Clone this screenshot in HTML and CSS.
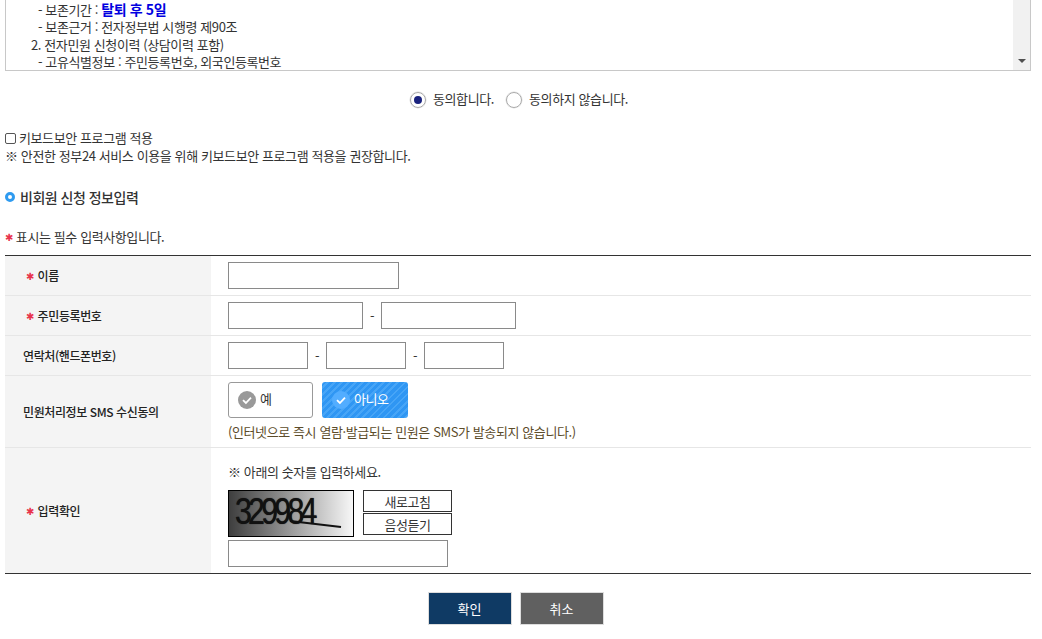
FILE: index.html
```html
<!DOCTYPE html>
<html lang="ko">
<head>
  <meta charset="utf-8">
  <title>비회원 신청 정보입력</title>
  <link rel="stylesheet" href="styles.css">
</head>
<body>
  <div class="container">
    <div class="terms">
      <div class="terms-text">
        <p class="sub">- 보존기간 : <strong class="blue">탈퇴 후 5일</strong></p>
        <p class="sub">- 보존근거 : 전자정부법 시행령 제90조</p>
        <p class="item">2. 전자민원 신청이력 (상담이력 포함)</p>
        <p class="sub">- 고유식별정보 : 주민등록번호, 외국인등록번호</p>
      </div>
      <div class="scrollbar"><span class="arrow"></span></div>
    </div>

    <div class="agree">
      <span class="radio on"></span><span class="agree-label">동의합니다.</span>
      <span class="radio"></span><span>동의하지 않습니다.</span>
    </div>

    <div class="keyboard">
      <label class="check-line"><span class="check"></span>키보드보안 프로그램 적용</label>
      <p>※ 안전한 정부24 서비스 이용을 위해 키보드보안 프로그램 적용을 권장합니다.</p>
    </div>

    <h2 class="title"><span class="ring"></span>비회원 신청 정보입력</h2>
    <p class="required-note"><span class="star">✱</span> 표시는 필수 입력사항입니다.</p>

    <div class="form">
      <div class="row r-name">
        <div class="head indent"><span class="star">✱</span> 이름</div>
        <div class="cell"><input class="input w170" type="text"></div>
      </div>
      <div class="row r-id">
        <div class="head indent"><span class="star">✱</span> 주민등록번호</div>
        <div class="cell">
          <input class="input w135" type="text"><span class="dash">-</span><input class="input w135" type="text">
        </div>
      </div>
      <div class="row r-tel">
        <div class="head">연락처(핸드폰번호)</div>
        <div class="cell">
          <input class="input w80" type="text"><span class="dash">-</span><input class="input w80" type="text"><span class="dash">-</span><input class="input w80" type="text">
        </div>
      </div>
      <div class="row r-sms">
        <div class="head">민원처리정보 SMS 수신동의</div>
        <div class="cell stack">
          <div class="choices">
            <div class="choice">
              <svg class="tick" width="20" height="20" viewBox="0 0 20 20"><circle cx="10" cy="10" r="9" fill="#999"/><path d="M6 10.2l2.9 2.8L14 7.6" fill="none" stroke="#fff" stroke-width="1.8"/></svg>
              <span>예</span>
            </div>
            <div class="choice selected">
              <svg class="tick" width="20" height="20" viewBox="0 0 20 20"><circle cx="10" cy="10" r="9" fill="#52adff"/><path d="M6 10.2l2.9 2.8L14 7.6" fill="none" stroke="#fff" stroke-width="1.8"/></svg>
              <span>아니오</span>
            </div>
          </div>
          <p class="sms-note">(인터넷으로 즉시 열람·발급되는 민원은 SMS가 발송되지 않습니다.)</p>
        </div>
      </div>
      <div class="row r-captcha">
        <div class="head indent"><span class="star">✱</span> 입력확인</div>
        <div class="cell stack">
          <p class="captcha-note">※ 아래의 숫자를 입력하세요.</p>
          <div class="captcha-line">
            <div class="captcha">
              <span class="captcha-num">329984</span>
              <svg class="captcha-stroke" width="126" height="47" viewBox="0 0 126 47"><path d="M62 31L113 37" stroke="#111" stroke-width="2"/></svg>
            </div>
            <div class="captcha-btns">
              <button class="small-btn" type="button">새로고침</button>
              <button class="small-btn" type="button">음성듣기</button>
            </div>
          </div>
          <input class="input w220" type="text">
        </div>
      </div>
    </div>

    <div class="actions">
      <button class="btn navy" type="button">확인</button>
      <button class="btn gray" type="button">취소</button>
    </div>
  </div>
</body>
</html>
```

FILE: styles.css
```css
* {
  box-sizing: border-box;
}

body {
  margin: 0;
  font-family: "Noto Sans CJK KR", "Noto Sans", sans-serif;
  font-size: 13px;
  letter-spacing: -0.4px;
  color: #333;
  background: #fff;
}

p {
  margin: 0;
}

.container {
  width: 1031px;
  height: 639px;
  overflow: hidden;
  padding-left: 5px;
}

.terms {
  display: flex;
  height: 71px;
  border: 1px solid #c8c8c8;
  border-top: none;
}

.terms-text {
  flex: 1;
  padding-top: 1px;
  line-height: 17.25px;
}

.terms-text .sub {
  padding-left: 32px;
}

.terms-text .item {
  padding-left: 25px;
}

.blue {
  color: #0000e0;
  font-size: 14px;
  font-weight: 700;
  line-height: 1;
}

.scrollbar {
  position: relative;
  width: 17px;
  background: #f1f1f1;
}

.arrow {
  position: absolute;
  left: 5px;
  bottom: 7px;
  border: 4px solid transparent;
  border-top: 4px solid #505050;
  border-bottom: none;
}

.agree {
  display: flex;
  align-items: center;
  height: 18px;
  margin-top: 18px;
  padding-left: 405px;
}

.radio {
  position: relative;
  width: 16px;
  height: 16px;
  margin-top: 3px;
  margin-right: 7px;
  border: 1px solid #aaa;
  border-radius: 50%;
  box-shadow: 0 0 0 0.5px #ddd;
}

.radio.on::after {
  content: "";
  position: absolute;
  left: 3px;
  top: 3px;
  width: 8px;
  height: 8px;
  border-radius: 50%;
  background: #1a237e;
}

.agree-label {
  margin-right: 12px;
}

.keyboard {
  margin-top: 22px;
  line-height: 18px;
}

.check-line {
  display: flex;
  align-items: center;
}

.check {
  width: 11px;
  height: 11px;
  margin-right: 3px;
  border: 1px solid #555;
  border-radius: 2px;
}

.title {
  display: flex;
  align-items: center;
  height: 20px;
  margin: 22px 0 0;
  font-size: 14px;
  font-weight: 500;
  letter-spacing: -0.5px;
}

.ring {
  width: 10px;
  height: 10px;
  margin-right: 5px;
  border: 3px solid #2f9bf0;
  border-radius: 50%;
}

.required-note {
  margin-top: 21px;
  line-height: 18px;
}

.star {
  color: #e8344e;
  font-size: 10px;
  vertical-align: 1px;
}

.form {
  margin-top: 9px;
  border-top: 1px solid #333;
  border-bottom: 1px solid #333;
}

.row {
  display: flex;
  border-bottom: 1px solid #e6e6e6;
}

.row:last-child {
  border-bottom: none;
}

.r-name,
.r-id,
.r-tel {
  height: 40px;
}

.r-sms {
  height: 72px;
}

.r-captcha {
  height: 125px;
}

.head {
  display: flex;
  align-items: center;
  gap: 4px;
  width: 206px;
  padding-left: 18px;
  background: #f4f4f4;
  font-size: 12px;
  font-weight: 500;
  color: #222;
}

.head.indent {
  padding-left: 21px;
}

.cell {
  display: flex;
  align-items: center;
  flex: 1;
  padding-left: 17px;
}

.stack {
  flex-direction: column;
  align-items: flex-start;
}

.input {
  height: 27px;
  margin: 0;
  padding: 0;
  border: 1px solid #8a8a8a;
  background: #fff;
}

.w80 {
  width: 80px;
}

.w135 {
  width: 135px;
}

.w170 {
  width: 171px;
}

.w220 {
  width: 220px;
}

.dash {
  width: 18px;
  text-align: center;
}

.choices {
  display: flex;
  gap: 9px;
  margin-top: 6px;
}

.choice {
  display: flex;
  align-items: center;
  gap: 3px;
  width: 85px;
  height: 36px;
  padding-left: 8px;
  border: 1px solid #999;
  border-radius: 3px;
}

.choice span {
  margin-top: -4px;
}

.choice.selected {
  width: 86px;
  border: none;
  padding-left: 9px;
  color: #fff;
  background: repeating-linear-gradient(135deg, #2f96f3 0, #2f96f3 3px, #47a5f7 3px, #47a5f7 5px);
}

.sms-note {
  margin-top: 5px;
  line-height: 18px;
  color: #5c4c2a;
}

.captcha-note {
  margin-top: 15px;
  line-height: 18px;
}

.captcha-line {
  display: flex;
  gap: 9px;
  margin-top: 9px;
}

.captcha {
  position: relative;
  width: 126px;
  height: 47px;
  overflow: hidden;
  border: 1px solid #000;
  background: linear-gradient(90deg, #3e3e3e, #f7f7f7);
}

.captcha-num {
  position: absolute;
  left: 6px;
  top: 0;
  font-family: "Liberation Sans", sans-serif;
  font-size: 37px;
  line-height: 42px;
  letter-spacing: -4.6px;
  color: #111;
  text-shadow: 0 0 1px #111;
  transform: scaleX(0.82);
  transform-origin: left;
}

.captcha-stroke {
  position: absolute;
  left: -1px;
  top: -1px;
}

.captcha-btns {
  display: flex;
  flex-direction: column;
  gap: 1px;
}

.small-btn {
  width: 89px;
  height: 22px;
  padding: 0;
  border: 1px solid #333;
  background: #fff;
  font: inherit;
  letter-spacing: inherit;
  color: #333;
}

.r-captcha .w220 {
  margin-top: 3px;
}

.actions {
  display: flex;
  justify-content: center;
  gap: 8px;
  margin-top: 18px;
  padding-right: 5px;
}

.btn {
  width: 84px;
  height: 33px;
  padding: 0;
  border: 1px solid #ddd;
  font: inherit;
  font-size: 13px;
  letter-spacing: 0;
  color: #fff;
}

.navy {
  background: #0f3a64;
}

.gray {
  background: #606060;
}
```
